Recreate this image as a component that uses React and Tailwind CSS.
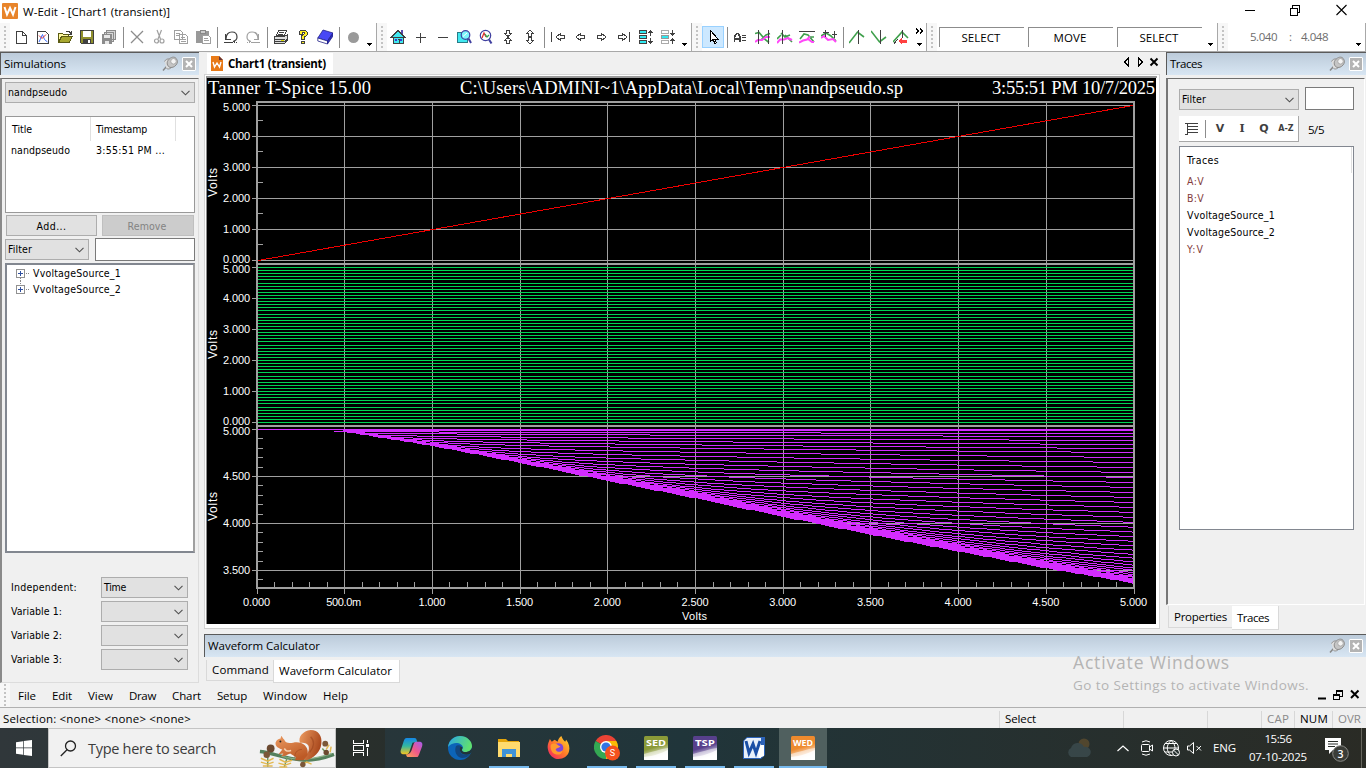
import { useLayoutEffect, useRef } from "react";

/* Text run whose tracking is adjusted so that it takes exactly `w` pixels. */
function T({ w, className = "", children }) {
  const ref = useRef(null);
  useLayoutEffect(() => {
    const el = ref.current;
    el.style.letterSpacing = "0px";
    const natural = el.getBoundingClientRect().width;
    el.style.letterSpacing = (w - natural) / el.textContent.length + "px";
  }, [w]);
  return (
    <span ref={ref} className={"inline-block shrink-0 whitespace-pre " + className}>
      {children}
    </span>
  );
}

const UI = "font-['Open_Sans','Noto_Sans',sans-serif]";
const TAH = "font-['DejaVu_Sans_Condensed','Noto_Sans','DejaVu_Sans',sans-serif] text-[10.5px]";

/* ---------- small building blocks ---------- */

function Pic({ children, className = "h-4 w-4", box = "0 0 16 16" }) {
  return (
    <svg viewBox={box} className={"shrink-0 " + className} fill="none" shapeRendering="crispEdges">
      {children}
    </svg>
  );
}

function Btn({ children }) {
  return <div className="flex h-[22px] w-[22px] shrink-0 items-center justify-center">{children}</div>;
}

function Sep() {
  return (
    <div className="flex w-[6px] shrink-0 justify-center">
      <div className="h-[21px] w-px bg-[#8c8c8c]" />
    </div>
  );
}

function Grip() {
  return (
    <div className="flex w-[10px] shrink-0 flex-col items-center justify-center gap-[2px] bg-[#f7f7f7]">
      {[0, 1, 2, 3, 4, 5].map((i) => (
        <div key={i} className="h-[2px] w-[2px] bg-[#c3c3c3]" />
      ))}
    </div>
  );
}

function Drop() {
  return (
    <div className="flex w-3 shrink-0 items-end justify-center pr-[2px] pb-[5px]">
      <Pic className="h-[3px] w-[5px]" box="0 0 5 3">
        <path d="M0 0h5v1h-1v1h-1v1h-1v-1h-1v-1h-1z" fill="#000" />
      </Pic>
    </div>
  );
}

function Bar({ className, children }) {
  return (
    <div className={"flex h-[29px] shrink-0 items-stretch border-r border-b border-[#a8a8a8] bg-white " + className}>
      {children}
    </div>
  );
}

function Chevron() {
  return (
    <svg viewBox="0 0 9 6" className="h-[6px] w-[9px] shrink-0" fill="none" stroke="#505050" strokeWidth="1.1">
      <path d="M.5 .8 4.5 4.8 8.5 .8" />
    </svg>
  );
}

function Combo({ className, label, w }) {
  return (
    <div className={"flex h-[21px] shrink-0 items-center justify-between border border-[#adadad] bg-[#e1e1e1] pr-[4px] pl-[2px] " + className}>
      {label ? <T w={w} className={TAH}>{label}</T> : <span />}
      <Chevron />
    </div>
  );
}

function PinClose() {
  return (
    <div className="flex items-center gap-[3px]">
      <svg viewBox="0 0 17 16" className="h-4 w-[17px]" fill="none">
        <path d="M1 14.500 5 10" stroke="#888" strokeWidth="1.500" />
        <path d="M2.500 5.500c1-2 3-3 5-2.500l3 7c-2 3-4 3.500-6 2.500" fill="#ddd" stroke="#909090" />
        <path d="M6 4.500c2-3 5-4 7-3s3 4 2 6-3 4-6 4-5-4-3-7z" fill="#c5c5c5" stroke="#8c8c8c" />
        <circle cx="11.500" cy="5.300" r="2.800" fill="#f4f4f4" stroke="#aaa" />
      </svg>
      <div className="flex h-[14px] w-[14px] items-center justify-center rounded-[1px] border border-white bg-[#b4b4b4]">
        <svg viewBox="0 0 8 8" className="h-2 w-2" stroke="#fff" strokeWidth="2">
          <path d="M1 1 7 7M7 1 1 7" />
        </svg>
      </div>
    </div>
  );
}

function PanelHead({ title, w }) {
  return (
    <div className="flex h-[23px] shrink-0 items-center justify-between border-t border-l border-[#5a5a5a] bg-gradient-to-b from-[#bccbda] to-[#d8e6f3] pr-[3px] pb-[1px] pl-[3px]">
      <T w={w} className={UI + " text-[11.5px] text-black"}>{title}</T>
      <PinClose />
    </div>
  );
}

/* ---------- toolbar icons ---------- */

const G = "#404040";
const D = "#a0a0a0";

const Page = () => <path d="M3.500 2.500h6l4 4v8h-10zM9.500 2.500v4h4" stroke={G} fill="#fff" />;
const NewChart = () => (
  <>
    <path d="M2.500 2.500h8l3 3v9h-11z" stroke={G} fill="#fff" />
    <g shapeRendering="auto">
      <path d="M4 13 7.500 5.500l2 5 3 2.500" stroke="#3a6cff" />
      <path d="M4 6.500l3 3 4-4" stroke="#e03030" />
    </g>
  </>
);
const OpenI = () => (
  <>
    <path d="M1.500 13.500v-9h4l1 1h5v2" stroke="#5b5b14" fill="#fff9a0" />
    <path d="M1.500 13.500 4.500 7.500h11l-3.500 6z" stroke="#5b5b14" fill="#a8a830" />
    <path d="M9 2.500h3l2 2M14.500 2v3h-3" stroke={G} />
  </>
);
const SaveI = () => (
  <>
    <path d="M1.500 1.500h13v13h-12l-1-1z" stroke={G} fill="#8f8f2c" />
    <path d="M4 2h8v6h-8z" fill="#fff" />
    <path d="M4 10h8v4h-8z" fill={G} />
    <path d="M9 11h2v3h-2z" fill="#fff" />
  </>
);
const SaveAll = () => (
  <>
    <path d="M5.500 1.500h9v9h-9zM3.500 3.500h9v9h-9z" stroke="#8c8c8c" fill="#d8d8d8" />
    <path d="M1 5h10v10H1z" fill="#8c8c8c" />
    <path d="M3 6h6v3H3zM4 12h4v3H4z" fill="#e8e8e8" />
  </>
);
const CutX = () => <path d="M2 2 14 14M14 2 2 14" stroke="#8c8c8c" strokeWidth="1.300" shapeRendering="auto" />;
const Scissors = () => (
  <g stroke={D} shapeRendering="auto" strokeWidth="1.200">
    <path d="M6 1 9.500 10M10.500 1 7 10" />
    <circle cx="5.500" cy="12" r="2" />
    <circle cx="11" cy="12" r="2" />
  </g>
);
const CopyI = () => (
  <>
    <path d="M1.500 1.500h6l2 2v7h-8zM6.500 5.500h6l2 2v7h-8z" stroke={D} fill="#fff" />
    <path d="M3 4.500h4M3 6.500h3M8 8.500h4M8 10.500h5M8 12.500h5" stroke={D} />
  </>
);
const PasteI = () => (
  <>
    <path d="M1 2h13v12H1z" fill="#999" />
    <path d="M5 1h5v3H5z" fill="#ccc" stroke="#888" />
    <path d="M7.500 6.500h6l2 2v6h-8z" fill="#fff" stroke={D} />
    <path d="M9 9.500h4M9 11.500h5" stroke={D} />
  </>
);
const UndoI = ({ c }) => (
  <g stroke={c}>
    <path d="M2.500 5v5.500h5" />
    <path d="M3 10C3 5 6 3 9 3s5 2 5 5-2 4-4 4.500" strokeWidth="1.200" shapeRendering="auto" />
    <path d="M1 13.500h9M11 13.500h1M13 13.500h1M10 12.500h2" />
  </g>
);
const PrintI = () => (
  <>
    <path d="M5.500 1.500h8l-2 5h-8z" fill="#fff" stroke={G} />
    <path d="M6 3.500h5M5 5.500h5" stroke={G} />
    <path d="M1.500 7.500h10l3-2v6l-3 3h-10z" fill="#ddd" stroke={G} />
    <path d="M2 10.500h10M2 12.500h10l2-2" stroke={G} />
    <path d="M8 11.500h3" stroke="#d8d800" />
  </>
);
const HelpI = () => (
  <>
    <path d="M4 5V3l2-2h4l2 2v3l-2.500 2v2.500h-3V7L9 5V3.500H7V5z" fill="#ffee20" stroke={G} />
    <path d="M6.500 12.500h3v2h-3z" fill="#ffee20" stroke={G} />
  </>
);
const BookI = () => (
  <g shapeRendering="auto">
    <path d="M6 1 16 4 10.500 12 .8 9z" fill="#4747f5" stroke="#222288" strokeWidth=".8" />
    <path d="M.8 9v3l9.700 3V12z" fill="#fff" stroke="#222288" strokeWidth=".8" />
    <path d="M10.500 12v3L16 7V4z" fill="#2c2cc0" stroke="#222288" strokeWidth=".8" />
  </g>
);
const HomeI = () => (
  <>
    <path d="M11 1h2v5h-2z" fill="#5a4ab0" />
    <path d="M1 8.500 8 1.500l7 7zM3 8.500h10v5.500H3z" fill="#40e8f0" stroke={G} />
    <path d="M5 10h2v2H5zM10 10h2v2h-2z" fill="#3838d0" />
    <path d="M7.500 10.500h2v3" stroke={G} />
  </>
);
const PlusI = () => <path d="M3.500 8.500h10M8.500 3.500v10" stroke={G} />;
const MinusI = () => <path d="M3.500 8.500h10" stroke={G} />;
const ZoomBox = () => (
  <>
    <path d="M1.500 3.500h10v10h-10z" fill="#40e8f0" stroke="#287c88" />
    <g shapeRendering="auto">
      <circle cx="9.500" cy="6" r="4.300" fill="#7cf4fa" stroke="#4040a0" strokeWidth="1.200" />
      <path d="M7 7.500 11 4" stroke="#fff" />
      <path d="M12.500 9.500 15 14" stroke="#4040a0" strokeWidth="2" />
    </g>
  </>
);
const ZoomWave = () => (
  <g shapeRendering="auto">
    <circle cx="7.500" cy="6.500" r="5.200" fill="#fff" stroke="#4040a0" strokeWidth="1.200" />
    <path d="M4 9 6 4l2 4" stroke="#e03030" strokeWidth="1.300" />
    <path d="M7 5l2 3 2-2" stroke="#30a050" strokeWidth="1.300" />
    <path d="M11 10.500 13.500 14.500" stroke="#4040a0" strokeWidth="2" />
  </g>
);
const VertIn = () => <path d="M6.500 1.500h3v3h2L8 7.500 4.500 4.500h2zM6.500 14.500h3v-3h2L8 8.500 4.500 11.500h2z" stroke={G} />;
const VertOut = () => <path d="M6.500 7.500h3v-3h2L8 1 4.500 4.500h2zM6.500 8.500h3v3h2L8 15 4.500 11.500h2z" stroke={G} />;
const ArrowL = ({ x = 0 }) => <path transform={`translate(${x} 0)`} d="M12.500 6.500v3h-4v2L4 8l4.500-3.500v2z" stroke={G} />;
const ArrowR = ({ x = 0 }) => <path transform={`translate(${x} 0)`} d="M3.500 6.500v3h4v2L12 8 7.500 4.500v2z" stroke={G} />;
const Stack = ({ inward }) => (
  <>
    <path d="M1.500 1.500h7v3h-7zM1.500 11.500h7v3h-7z" fill={inward ? "#fff" : "#30e8f0"} stroke={inward ? "#aaa" : G} />
    <path d="M1.500 6.500h7v3h-7z" fill="#30e8f0" stroke={inward ? "#999" : G} />
    <path d={inward ? "M12.500 1v6M10 4.500h5M11 5.500h3M12.500 15V9M10 11.500h5M11 10.500h3" : "M12.500 1v6M10 3.500h5M11 2.500h3M12.500 15V9M10 12.500h5M11 13.500h3"} stroke={G} />
  </>
);
const CursorI = () => <path d="M5.500 1.500v11l2.500-2 2 4 1.500-1-2-3.500h3.500z" fill="#fff" stroke="#000" />;

const Green = ({ d }) => <path d={d} stroke="#3fa04c" strokeWidth="1.600" shapeRendering="auto" />;
const Pink = ({ d }) => <path d={d} stroke="#ff48f8" strokeWidth="2" shapeRendering="auto" />;
const Wave1 = () => (<><Green d="M0 4.500 4 3.500l6 7 4 3M6 11l5-5 4-1.500" /><Pink d="M0 13l3-2h4l4-3h4" /><path d="M3.500 1v14M13.500 1v14" stroke={G} /></>);
const Wave2 = () => (<><Green d="M0 10 4 6M4 4l4 4 5-2M8 6l7 7" /><Pink d="M0 14 3 10.500h4l4-1.500 4 2" /><path d="M5.500 1v14" stroke={G} /></>);
const Wave3 = () => (<><path d="M0 2.500h16" stroke={G} /><Green d="M1 10 5 5l4 1 6 7M10 8l5 0" /><Pink d="M0 13.500l4-2 4-1 3-3" /><Pink d="M9 10l4 3h2" /></>);
const Wave4 = () => (<><Green d="M0 7 5 4l5 3 5 5" /><Pink d="M0 9l3-2 4 4 5-1 3 3" /><path d="M4.500 1v7M1.500 3.500h6M13.500 2v7M10.500 5.500h5" stroke={G} /></>);
const Peak = () => (<><Green d="M0 14 8.500 3 15 8" /><path d="M9.500 1v14" stroke={G} /></>);
const Valley = () => (<><Green d="M0 2 8.500 13 15 8" /><path d="M9.500 1v14" stroke={G} /></>);
const PeakBack = () => (<><Green d="M0 13 9 3l6 6" /><path d="M9.500 1v8M1 14.500 5 10" stroke={G} /><path d="M5 12l4-4v3h5v3H9v2z" fill="#ff4040" /></>);
const MarkA = () => (
  <>
    <path d="M1.500 13V7.500L4 4.500h1l2 3V13M2 10h5" stroke={G} strokeWidth="1.800" />
    <path d="M9 6.500h4M9 8.500h4M9 11.500h4" stroke={G} />
  </>
);

function Toolbars() {
  return (
    <div className="flex h-[29px] shrink-0 bg-white">
      <Bar className="w-[377px]">
        <Grip />
        <div className="flex items-center">
          {[Page, NewChart, OpenI, SaveI, SaveAll].map((I, i) => <Btn key={i}><Pic><I /></Pic></Btn>)}
          <Sep />
          {[CutX, Scissors, CopyI, PasteI].map((I, i) => <Btn key={i}><Pic><I /></Pic></Btn>)}
          <Sep />
          <Btn><Pic><UndoI c={G} /></Pic></Btn>
          <Btn><Pic className="h-4 w-4 -scale-x-100"><UndoI c={D} /></Pic></Btn>
          <Sep />
          {[PrintI, HelpI, BookI].map((I, i) => <Btn key={i}><Pic><I /></Pic></Btn>)}
          <Sep />
          <Btn><div className="h-[11px] w-[11px] rounded-full bg-[#9a9a9a]" /></Btn>
        </div>
        <Drop />
      </Bar>
      <Bar className="w-[315px]">
        <Grip />
        <div className="flex items-center">
          {[HomeI, PlusI, MinusI, ZoomBox, ZoomWave, VertIn, VertOut].map((I, i) => <Btn key={i}><Pic><I /></Pic></Btn>)}
          <Sep />
          <Btn><Pic><path d="M1.500 3v10" stroke={G} /><ArrowL x={2} /></Pic></Btn>
          <Btn><Pic><ArrowL /></Pic></Btn>
          <Btn><Pic><ArrowR /></Pic></Btn>
          <Btn><Pic><ArrowR x={-1} /><path d="M13.500 3v10" stroke={G} /></Pic></Btn>
          <Btn><Pic><Stack /></Pic></Btn>
          <Btn><Pic><Stack inward /></Pic></Btn>
        </div>
        <Drop />
      </Bar>
      <Bar className="w-[235px]">
        <Grip />
        <div className="flex items-center">
          <div className="flex h-[22px] w-[22px] items-center justify-center border border-[#99d1ff] bg-[#cce8ff]"><Pic><CursorI /></Pic></div>
          <Sep />
          {[MarkA, Wave1, Wave2, Wave3, Wave4].map((I, i) => <Btn key={i}><Pic><I /></Pic></Btn>)}
          <Sep />
          {[Peak, Valley, PeakBack].map((I, i) => <Btn key={i}><Pic><I /></Pic></Btn>)}
        </div>
        <div className="flex w-3 flex-col items-center justify-between pt-[5px] pb-[5px] pl-[2px]">
          <Pic className="h-[6px] w-[9px]" box="0 0 9 6"><path d="M1 .5l2.500 2.500L1 5.500M5 .5l2.500 2.500L5 5.500" stroke="#000" strokeWidth="1.700" /></Pic>
          <Pic className="h-[3px] w-[5px]" box="0 0 5 3"><path d="M0 0h5v1h-1v1h-1v1h-1v-1h-1v-1h-1z" fill="#000" /></Pic>
        </div>
      </Bar>
      <Bar className="w-[291px]">
        <Grip />
        <div className="flex flex-1 items-center gap-[4px] pl-[2px]">
          {[["SELECT", 39], ["MOVE", 33], ["SELECT", 39]].map(([s, w], i) => (
            <div key={i} className="flex h-5 w-[85px] items-center justify-center border-t border-l border-[#8c8c8c] pr-[2px]">
              <T w={w} className={UI + " text-[11.5px]"}>{s}</T>
            </div>
          ))}
        </div>
        <Drop />
      </Bar>
      <Bar className="flex-1">
        <Grip />
        <div className={UI + " flex flex-1 items-center pl-[22px] text-[11.5px] text-[#6d6d6d]"}>
          <T w={27}>5.040</T>
          <T w={3} className="ml-[12px]">:</T>
          <T w={27} className="ml-[9px]">4.048</T>
        </div>
        <Drop />
      </Bar>
    </div>
  );
}

/* ---------- chart ---------- */

const GRID = "#a0a0a0";
const X0 = 257;
const DX = 87.7;
const LOWER = [0, 2, 16, 33, 51, 68.500, 87, 105, 122, 139, 154.500];

function lowerEdge(v) {
  if (v < 0.430) return 0;
  const k = Math.min(Math.floor(v * 2), 9);
  return LOWER[k] + (LOWER[k + 1] - LOWER[k]) * (v * 2 - k);
}

/* Drop in pixels that each swept curve settles to at the right edge. */
const SETTLED = [0.300, 1, 4, 7, 11, 15, 19, 23];
while (SETTLED.length < 48) SETTLED.push(SETTLED[SETTLED.length - 1] + 5);

function transferCurves() {
  return SETTLED.map((asym) => {
    let d = "";
    let last = null;
    for (let s = 0; s <= 200; s++) {
      const v = s / 40;
      const e = lowerEdge(v);
      const p = 3 + v;
      const a = asym * Math.pow(v / 5, 0.300);
      const drop = e <= 0 ? 0 : Math.pow(Math.pow(a, -p) + Math.pow(e, -p), -1 / p);
      const y = 429.5 + Math.round(drop);
      const x = Math.round(X0 + v * 175.4) - 2;
      if (last === null) d += `M257 ${y}`;
      else if (y !== last) d += `H${x}M${x} ${y}`;
      last = y;
    }
    return d + "H1133";
  });
}

const CURVES = transferCurves();
const range = (n) => Array.from({ length: n }, (_, i) => i);

function ChartView() {
  const rows = [
    ...range(6).map((i) => [260 - 31 * i, `${i}.000`, i === 0 ? 263 : i === 5 ? 111 : 264 - 31 * i]),
    ...range(6).map((i) => [422 - 31 * i, `${i}.000`, i === 0 ? 425 : i === 5 ? 273 : 426 - 31 * i]),
    [429, "5.000", 435],
    [476, "4.500", 480],
    [523, "4.000", 527],
    [570, "3.500", 574],
  ];
  const xl = ["0.000", "500.0m", "1.000", "1.500", "2.000", "2.500", "3.000", "3.500", "4.000", "4.500", "5.000"];
  return (
    <svg viewBox="207 78 949 546" className="block h-[546px] w-[949px] bg-black">
      <g stroke={GRID} shapeRendering="crispEdges" fill="none">
        {range(11).map((i) => {
          const x = Math.floor(X0 + DX * i) + 0.5;
          return <path key={i} d={`M${x} 102V594`} />;
        })}
        {rows.map(([y], i) => <path key={i} d={`M252 ${y + 0.5}H1134`} />)}
        {range(5).map((i) => <path key={i} d={`M257 ${244.500 - 31 * i}h6`} />)}
        {range(16).map((i) => <path key={i} d={`M257 ${Math.floor(438.900 + 9.400 * i) + 0.5}h6`} />)}
        {range(50).map((i) => <path key={i} d={`M${Math.floor(X0 + 17.540 * i) + 0.5} 582v6`} />)}
      </g>
      <g shapeRendering="crispEdges" fill="none">
        {range(51).map((i) => (
          <path key={i} d={`M258 ${Math.round(422 - 3.100 * i) + 0.5}H1133`} stroke="#00d453" />
        ))}
        {CURVES.map((d, i) => <path key={i} d={d} stroke="#d42cff" />)}
        <path d="M258 260.500 1133 105.500" stroke="#f00000" />
      </g>
      <g fill={GRID} shapeRendering="crispEdges">
        <path d="M256 101h879v2H256zM256 263h879v2H256zM256 425h879v2H256zM256 587h879v2H256zM256 101h2v488h-2zM1133 101h2v488h-2z" />
      </g>
      <g fill="#fff" className="font-['Liberation_Sans',sans-serif] text-[11px]">
        {rows.map(([, t, y], i) => <text key={i} x="223" y={y} textLength="27">{t}</text>)}
        {xl.map((t, i) => (
          <text key={t} x={X0 + DX * i - (i === 1 ? 18.500 : 14)} y="606" textLength={i === 1 ? 35 : 27}>{t}</text>
        ))}
        <text x="682" y="620" textLength="25">Volts</text>
      </g>
      <g fill="#fff" className="font-['Liberation_Sans',sans-serif] text-[12px]">
        {[197, 359, 521].map((y) => (
          <text key={y} transform={`translate(217 ${y}) rotate(-90)`} textLength="29">Volts</text>
        ))}
      </g>
      <g fill="#fff" className="font-['Liberation_Serif',serif] text-[18.5px]">
        <text x="208" y="94" textLength="163">Tanner T-Spice 15.00</text>
        <text x="460" y="94" textLength="443">C:\Users\ADMINI~1\AppData\Local\Temp\nandpseudo.sp</text>
        <text x="992" y="94" textLength="163">3:55:51 PM 10/7/2025</text>
      </g>
    </svg>
  );
}

/* ---------- panels ---------- */

function Simulations() {
  return (
    <div className="flex h-[631px] w-[199px] shrink-0 flex-col">
      <PanelHead title="Simulations" w={62} />
      <div className="mt-[3px] flex flex-1 flex-col border-t border-r border-b border-l-2 border-t-[#6e6e6e] border-r-[#dcdcdc] border-b-[#dcdcdc] border-l-[#8a8a8a] pl-[3px]">
        <Combo className="mt-[3px] w-[190px]" label="nandpseudo" w={59} />
        <div className={TAH + " mt-[13px] h-[97px] w-[190px] shrink-0 border border-[#999] bg-white"}>
          <div className="flex h-[24px]">
            <div className="flex w-[85px] items-center border-r border-[#e0e0e0] pl-[6px]"><T w={20}>Title</T></div>
            <div className="flex w-[85px] items-center border-r border-[#e0e0e0] pl-[5px]"><T w={51}>Timestamp</T></div>
          </div>
          <div className="flex h-[18px] items-center pl-[5px]">
            <T w={59}>nandpseudo</T>
            <T w={69} className="ml-[26px]">3:55:51 PM ...</T>
          </div>
        </div>
        <div className={TAH + " mt-[2px] flex h-[21px] shrink-0 gap-[5px] pl-[1px]"}>
          <div className="flex w-[91px] items-center justify-center border border-[#adadad] bg-[#e1e1e1] pt-[1px]"><T w={30}>Add...</T></div>
          <div className="flex w-[92px] items-center justify-center border border-[#bfbfbf] bg-[#ccc] pt-[1px] pr-[2px] text-[#838383]"><T w={39}>Remove</T></div>
        </div>
        <div className="mt-[2px] flex h-[23px] shrink-0 items-center">
          <Combo className="w-[84px]" label="Filter" w={24} />
          <div className="ml-[6px] h-[23px] w-[100px] border border-[#7a7a7a] bg-white" />
        </div>
        <div className={TAH + " mt-[2px] h-[290px] w-[190px] shrink-0 border-2 border-[#828790] border-r-[#a0a0a0] bg-white pl-[9px]"}>
          {["VvoltageSource_1", "VvoltageSource_2"].map((s, i) => (
            <div key={s} className="flex h-4 items-center">
              <svg viewBox="0 0 16 16" className="h-4 w-4 shrink-0" shapeRendering="crispEdges" fill="none">
                <path d={i ? "M4.500 0v4M10 8.500h4" : "M4.500 13v3M10 8.500h4"} stroke="#888" strokeDasharray="1 1" />
                <path d="M.5 4.500h8v8h-8z" fill="#fff" stroke="#919191" />
                <path d="M2 8.500h5M4.500 6v5" stroke="#3050a0" />
              </svg>
              <T w={88} className="ml-[1px]">{s}</T>
            </div>
          ))}
        </div>
        <div className={TAH + " mt-[24px] flex flex-col gap-[3px] pl-[6px]"}>
          {[["Independent:", 66, "Time"], ["Variable 1:", 51], ["Variable 2:", 51], ["Variable 3:", 51]].map(([t, w, v]) => (
            <div key={t} className="flex h-[21px] items-center">
              <div className="w-[90px]"><T w={w}>{t}</T></div>
              <Combo className="w-[87px]" label={v} w={22} />
            </div>
          ))}
        </div>
      </div>
    </div>
  );
}

function ChartPane() {
  return (
    <div className="ml-[5px] flex w-[956px] shrink-0 flex-col">
      <div className="flex h-[22px] items-end justify-between pl-[3px]">
        <div className="flex h-[21px] w-[126px] items-center bg-white pl-[4px]">
          <svg viewBox="0 0 12 15" className="h-[15px] w-3">
            <path d="M0 0h8l4 4v11H0z" fill="#e87a17" />
            <path d="M8 0v4h4z" fill="#633" />
            <path d="M2 6l1.500 5L6 7l2.500 4L10 6" fill="none" stroke="#fff" strokeWidth="1.400" />
          </svg>
          <T w={98} className={UI + " ml-[5px] text-[11.5px] font-bold"}>Chart1 (transient)</T>
        </div>
        <svg viewBox="0 0 36 10" className="mr-[1px] mb-[7px] h-[10px] w-9" fill="none" stroke="#000">
          <path d="M5.500 1v8L1.500 5zM15.500 1v8L19.500 5z" shapeRendering="crispEdges" />
          <path d="M27.500 1.500 34.500 8.500M34.500 1.500 27.500 8.500" strokeWidth="1.900" />
        </svg>
      </div>
      <div className="border border-[#d4d4d4] border-b-[#cfcfcf] bg-white pt-[1px] pr-[2px] pb-[4px] pl-[1px]">
        <div className="border-t-2 border-l border-[#8a8a8a] border-t-[#9a9a9a]">
          <ChartView />
        </div>
      </div>
    </div>
  );
}

function Traces() {
  return (
    <div className="ml-[6px] flex w-[200px] flex-col">
      <PanelHead title="Traces" w={32} />
      <div className="mt-[3px] flex h-[527px] w-[199px] shrink-0 flex-col border-t border-r border-b border-l-2 border-t-[#6e6e6e] border-r-white border-b-white border-l-[#777] pl-[11px]">
        <div className="mt-[8px] flex h-[23px] shrink-0 items-center gap-[6px]">
          <Combo className="w-[120px] self-end" label="Filter" w={24} />
          <div className="h-[23px] w-[49px] border border-[#7a7a7a] bg-white" />
        </div>
        <div className="mt-[6px] flex h-[26px] shrink-0 items-center">
          <div className="flex h-[26px] w-[120px] items-center border-r border-b border-[#a8a8a8] bg-white pl-[5px]">
            <Pic><path d="M1 2.500h13M3.500 3v10M4 5.500h10M4 8.500h10M4 11.500h10M1 13.500h3" stroke={G} /></Pic>
            <div className="mr-[3px] ml-[5px] h-[18px] w-px shrink-0 bg-[#8c8c8c]" />
            <div className="flex shrink-0 items-center font-['DejaVu_Sans','Liberation_Sans',sans-serif] text-[11px] font-bold text-[#404040]">
              <span className="w-[22px] text-center">V</span>
              <span className="w-[22px] text-center font-['DejaVu_Serif',serif]">I</span>
              <span className="w-[22px] text-center">Q</span>
              <span className="w-[22px] text-center text-[8px] leading-none">A-Z</span>
            </div>
          </div>
          <T w={16} className={UI + " mt-[2px] ml-[9px] text-[11.5px]"}>5/5</T>
        </div>
        <div className={TAH + " mt-[4px] h-[384px] w-[175px] shrink-0 border border-[#828790] bg-white pl-[7px]"}>
          <div className="mr-[1px] flex h-[26px] items-center border-r border-[#e0e0e0]"><T w={32}>Traces</T></div>
          {[["A:V", 17, 1], ["B:V", 17, 1], ["VvoltageSource_1", 88], ["VvoltageSource_2", 88], ["Y:V", 17, 1]].map(([t, w, r]) => (
            <div key={t} className={"flex h-[17px] items-center " + (r ? "text-[#843c3c]" : "text-black")}>
              <T w={w}>{t}</T>
            </div>
          ))}
        </div>
      </div>
      <div className={UI + " flex h-[25px] shrink-0 pt-[1px] pl-[2px] text-[11.5px]"}>
        <div className="flex h-[22px] w-[64px] items-center border-b border-l border-[#d9d9d9] pl-[5px]"><T w={53}>Properties</T></div>
        <div className="flex h-[24px] w-[47px] items-center border-r border-b border-[#d9d9d9] bg-white pl-[5px]"><T w={32}>Traces</T></div>
      </div>
    </div>
  );
}

/* ---------- taskbar ---------- */

function Squirrel() {
  return (
    <svg viewBox="0 0 78 40" className="h-[39px] w-[78px]" fill="none">
      <defs>
        <linearGradient id="fur" x1="0" y1="0" x2=".6" y2="1">
          <stop offset="0" stopColor="#eb9a60" />
          <stop offset="1" stopColor="#bd5a26" />
        </linearGradient>
        <linearGradient id="tail" x1="0" y1="0" x2="1" y2=".4">
          <stop offset="0" stopColor="#ee9d62" />
          <stop offset="1" stopColor="#a9481d" />
        </linearGradient>
      </defs>
      <path d="M2 23c12 1 26 8 46 9 12 0 22-3 30-6" stroke="#54805c" strokeWidth="3.500" />
      <path d="M24 28c12 3 22 4 32 2s14-3 20-5" stroke="#8db38c" strokeWidth="1.200" />
      <path d="M10 26v13M30 29l-3 10M48 33l-2 6M66 20l6 7" stroke="#6f9a62" strokeWidth="1.500" />
      <path d="M3 30l7 3 6-3M3 34l7 2 6-2M5 38h10M22 31l6 3 7-2M21 35l7 2 6-2M22 39h8M44 37l6-3 5 2M70 21l3-5M74 24l1-6" stroke="#e3b850" strokeWidth="1.500" />
      <circle cx="13" cy="20" r="4" fill="#6b4930" /><circle cx="9" cy="26.500" r="3.300" fill="#7b5738" />
      <circle cx="46" cy="36.500" r="2.800" fill="#7b5738" /><circle cx="69" cy="15" r="3" fill="#7b5738" /><circle cx="70" cy="24" r="2.800" fill="#6b4930" />
      <path d="M46 30c4-3 7-7 6-12-1-4-5-4-9-4-2-6 3-12 11-13 8 0 12 6 11 14-1 9-8 15-16 17z" fill="url(#tail)" />
      <path d="M54 8c4 4 4 10-1 16" stroke="#8f3a16" strokeWidth="1.500" opacity=".45" />
      <path d="M18 15c0-3 3-5 5-5l1-3 2 3 1 1c1 3 4 4 9 3 8-2 16 3 15 11 0 3-3 4-4 7h-9l1-3-6-4c-3 1-4 3-9 3l2-3-5 1 4-5c-3-1-7-3-7-6z" fill="url(#fur)" />
      <circle cx="23" cy="12.800" r="1" fill="#222" />
      <path d="M27 20c2 3 3 3 7 2" stroke="#f6cfae" strokeWidth="1.600" />
      <path d="M38 30c-1-5 2-9 7-9" stroke="#9a431b" strokeWidth="1" opacity=".6" />
    </svg>
  );
}

function AppTile({ children, open, active }) {
  return (
    <div className={"flex h-10 w-12 shrink-0 flex-col items-center " + (active ? "bg-[#50605f]" : "")}>
      <div className="flex h-[38px] items-center pt-[1px]">{children}</div>
      <div className={"h-[2px] " + (active ? "w-12 " : "w-10 ") + (open ? "bg-[#76b9ed]" : "")} />
    </div>
  );
}

function Suite({ id, name, c }) {
  return (
    <svg viewBox="0 0 24 24" className="h-6 w-6">
      <defs>
        <linearGradient id={id} x1="0" y1="0" x2=".3" y2="1">
          <stop offset="0" stopColor={c} />
          <stop offset=".55" stopColor={c} />
          <stop offset="1" stopColor="#fff" />
        </linearGradient>
      </defs>
      <rect width="24" height="24" rx="1.500" fill={`url(#${id})`} />
      <path d="M0 18C8 16 16 13 24 12V24H0z" fill="#fff" opacity=".5" />
      <path d="M0 21c10-1 18-4 24-7v10H0z" fill="#fff" opacity=".8" />
      <text x="2" y="9.500" fill="#fff" textLength="20" lengthAdjust="spacingAndGlyphs" className="font-['Open_Sans',sans-serif] text-[9.5px] font-bold">{name}</text>
    </svg>
  );
}

function Taskbar() {
  return (
    <div className="flex h-10 shrink-0 bg-gradient-to-r from-[#30373a] via-[#20353a] to-[#2a2b25]">
      <div className="flex w-12 items-center justify-center">
        <svg viewBox="0 0 16 16" className="h-4 w-4" fill="#fff"><path d="M0 2.200 7 1.200V7.600H0zM7.700 1.100 16 0V7.600H7.700zM0 8.300H7V14.800L0 13.800zM7.700 8.300H16V16L7.700 14.900z" /></svg>
      </div>
      <div className="flex w-72 items-center border border-[#c4c4c4] bg-[#f1f1f1] pl-[11px]">
        <svg viewBox="0 0 17 17" className="h-[17px] w-[17px]" fill="none" stroke="#222" strokeWidth="1.300"><circle cx="10.500" cy="6" r="5" /><path d="M7 9.700.8 16" /></svg>
        <T w={128} className={UI + " mt-[2px] ml-[11px] text-[14.5px] text-[#3c3c3c]"}>Type here to search</T>
        <div className="ml-auto"><Squirrel /></div>
      </div>
      <div className="mr-[2px] flex w-[49px] items-center justify-center bg-[#2a2c26]/70">
        <svg viewBox="0 0 16 16" className="h-4 w-4" fill="none" stroke="#fff" shapeRendering="crispEdges"><path d="M.5 0v3.500h10V0M.5 16v-3.500h10V16M.5 5.500h10v5H.5zM14.500 0v3M14.500 8v8" /><path d="M13 4h3v3h-3z" fill="#fff" stroke="none" /></svg>
      </div>
      <div className="flex gap-px">
        <AppTile>
          <svg viewBox="0 0 24 24" className="h-[23px] w-[23px]">
            <defs>
              <linearGradient id="cpa" x1="0" y1="0" x2="0" y2="1"><stop stopColor="#1487e8" /><stop offset=".5" stopColor="#33b8a0" /><stop offset="1" stopColor="#f5c320" /></linearGradient>
              <linearGradient id="cpb" x1="1" y1="0" x2="0" y2="1"><stop stopColor="#a45cf0" /><stop offset=".5" stopColor="#f0588a" /><stop offset="1" stopColor="#ffa850" /></linearGradient>
            </defs>
            <path d="M7 2h8c2 0 2 1 3 4l-5 1-3 9c-1 3-2 3-4 3H4c-3 0-4-2-3-5L4 5c1-2 1-3 3-3z" fill="url(#cpa)" />
            <path d="M17 22H9c-2 0-2-1-3-3 3 0 5-1 6-4l2-6c1-3 2-3 4-3h2c3 0 4 2 3 5l-3 8c-1 2-1 3-3 3z" fill="url(#cpb)" />
          </svg>
        </AppTile>
        <AppTile>
          <svg viewBox="0 0 24 24" className="h-6 w-6">
            <defs><linearGradient id="edg" x1="0" y1="0" x2="1" y2=".3"><stop stopColor="#2aa5e8" /><stop offset="1" stopColor="#5fe070" /></linearGradient></defs>
            <circle cx="12" cy="12" r="12" fill="#0c64b8" />
            <path d="M0 11C1 4 6 0 12 0c7 0 12 5 12 10 0 4-3 6-6 6-4 0-5-2-3-4 0-3-3-5-7-5-5 0-8 4-8 4z" fill="url(#edg)" />
            <path d="M8 10c-2 5 0 11 6 12 3 0 6-1 8-4-4 2-9 1-10-3-.5-2 .5-4 1-5-1-1-4-1-5 0z" fill="#12467f" />
            <path d="M12.500 10.500c1.500 0 2.500 1 1.800 2-1.500 3 2 4 4 3.500 2-.4 4.500-1 5.500-4.500l.2 4-2 2.500c-4 1.500-9 .5-10-3-.4-1.500 0-3.500.5-4.500z" fill="#20353a" />
          </svg>
        </AppTile>
        <AppTile open>
          <svg viewBox="0 0 22 20" className="h-5 w-[22px]"><path d="M0 1h8l2 2h11v16H0z" fill="#e5a50a" /><path d="M0 4h22v15H0z" fill="#ffdb6e" /><path d="M4 19v-8h14v8h-4v-3H8v3z" fill="#3f93d8" /></svg>
        </AppTile>
        <AppTile>
          <svg viewBox="0 0 24 24" className="h-[23px] w-[23px]">
            <defs><linearGradient id="ffx" x1="1" y1="0" x2="0" y2="1"><stop stopColor="#ffe02c" /><stop offset=".5" stopColor="#ff7a28" /><stop offset="1" stopColor="#f0186c" /></linearGradient></defs>
            <path d="M1 14C0 9 2 6 3 3l2 3 3-2 3 2c1-3 2-5 4-6 1 3 2 4 4 6l1-2c3 4 4 8 3 12-1 5-6 8-11 8S2 20 1 14z" fill="url(#ffx)" />
            <circle cx="12" cy="12.500" r="5" fill="#8045d8" />
            <path d="M4 9c3-2 6-1 8 1l2 1c-2 2-4 1-5 3 1 3 5 3 7 1 0 4-4 5-7 4-4-1-6-6-5-10z" fill="#ff9a2c" />
          </svg>
        </AppTile>
        <AppTile open>
          <svg viewBox="0 0 26 26" className="h-[26px] w-[26px]">
            <path d="M12 12 1.600 6A12 12 0 0 1 22.400 6z" fill="#ea4335" />
            <path d="M12 12 1.600 6A12 12 0 0 0 12 24z" fill="#34a853" />
            <path d="M12 12V24A12 12 0 0 0 22.400 6H12z" fill="#fbbc05" />
            <circle cx="12" cy="12" r="6" fill="#fff" /><circle cx="12" cy="12" r="4.600" fill="#3275e4" />
            <circle cx="18.500" cy="18" r="7.500" fill="#f4511e" />
            <text x="18.500" y="21.200" fill="#fff" textAnchor="middle" className="font-['Roboto',sans-serif] text-[9px]">S</text>
          </svg>
        </AppTile>
        <AppTile open><Suite id="sed" name="SED" c="#8a9a38" /></AppTile>
        <AppTile open><Suite id="tsp" name="TSP" c="#57408c" /></AppTile>
        <AppTile open>
          <svg viewBox="0 0 22 22" className="h-[22px] w-[22px]">
            <path d="M4 0h18v18l-4 4H0V4z" fill="#2d63b8" /><path d="M4 1h14v20H1V4z" fill="#e8f0fa" /><path d="M14 8h7v11l-5 2z" fill="#fff" />
            <path d="M3 4l3 12 4-9 3 9 4-12" fill="none" stroke="#1b4fa5" strokeWidth="3" />
          </svg>
        </AppTile>
        <AppTile open active><Suite id="wed" name="WED" c="#ee8a2e" /></AppTile>
      </div>
      <div className="ml-auto flex items-center text-white">
        <svg viewBox="0 0 26 20" className="mr-[25px] h-5 w-[26px] opacity-25"><circle cx="18" cy="6" r="5.500" fill="#d08a30" /><path d="M5 19a5 5 0 0 1 0-9 7 7 0 0 1 13-1 5 5 0 0 1 3 10z" fill="#6a8a98" /></svg>
        <svg viewBox="0 0 12 7" className="mr-[12px] h-[7px] w-3" fill="none" stroke="#fff" strokeWidth="1.200"><path d="M.5 6 6 1l5.500 5" /></svg>
        <svg viewBox="0 0 12 16" className="mr-[10px] h-4 w-3" fill="none" stroke="#fff"><rect x=".5" y="4.500" width="8" height="7" rx="1" /><path d="M8.500 7 11.500 5v6L8.500 9M1 2q4-2.500 8 0M1 14q4 2.500 8 0" /></svg>
        <svg viewBox="0 0 18 17" className="mr-[6px] h-[17px] w-[18px]" fill="none" stroke="#fff"><circle cx="8" cy="8" r="7.500" /><path d="M.5 8h15M2 3.500h12M2 12h8M8 .5c-5 5-5 10 0 15M8 .5c3 2 4 5 4 8" /><circle cx="13" cy="12.500" r="3.500" fill="#2a3432" /><path d="M10.500 10 15.500 15" /></svg>
        <svg viewBox="0 0 16 14" className="mr-[10px] h-[14px] w-4" fill="none" stroke="#fff"><path d="M.5 5v4h2l4 3.500v-11L2.500 5zM9.500 5l4.500 4.500M14 5 9.500 9.500" /></svg>
        <T w={23} className={UI + " text-[11.5px]"}>ENG</T>
        <div className={UI + " ml-[12px] flex w-[60px] flex-col items-center text-[11.5px] leading-[18px]"}>
          <T w={27}>15:56</T>
          <T w={58}>07-10-2025</T>
        </div>
        <svg viewBox="0 0 24 26" className="mt-[2px] mr-[12px] ml-[17px] h-[26px] w-6">
          <path d="M0 2h16v12H8l-4 4v-4H0z" fill="#fff" />
          <path d="M3 5.500h10M3 8h10M3 10.500h7" stroke="#2b2f2a" />
          <circle cx="15.500" cy="17.500" r="7.800" fill="#3b3d38" stroke="#8a8a86" />
          <text x="15.500" y="21.500" fill="#fff" textAnchor="middle" className="font-['Open_Sans',sans-serif] text-[10.5px] font-semibold">3</text>
        </svg>
        <div className="mr-[4px] h-10 w-px bg-[#66665e]" />
      </div>
    </div>
  );
}

/* ---------- window ---------- */

export default function App() {
  const menu = [["File", 18], ["Edit", 20], ["View", 25], ["Draw", 27], ["Chart", 29], ["Setup", 30], ["Window", 44], ["Help", 25]];
  return (
    <div className={UI + " relative flex h-[768px] w-[1366px] flex-col overflow-hidden bg-[#f0f0f0] leading-none text-black"}>
      <div className="flex h-[23px] shrink-0 items-center bg-white pl-[2px]">
        <svg viewBox="0 0 16 16" className="-mt-[1px] h-4 w-4"><rect width="16" height="16" rx="1" fill="#e8842a" /><path d="M2.500 4 5 11.500 8 5l3 6.500L13.500 4" fill="none" stroke="#fff" strokeWidth="2" /></svg>
        <T w={147} className="ml-[5px] text-[11.5px]">W-Edit - [Chart1 (transient)]</T>
        <svg viewBox="0 0 102 12" className="mr-[19px] mb-[3px] ml-auto h-3 w-[102px]" fill="none" stroke="#000">
          <path d="M0 6.500h10M45.500 4.500h7v7h-7zM47.500 4V1.500h7v7H53" shapeRendering="crispEdges" />
          <path d="M91.500 1l10 10M101.500 1l-10 10" strokeWidth="1.100" />
        </svg>
      </div>
      <Toolbars />
      <div className="flex h-[631px] shrink-0">
        <Simulations />
        <div className="flex flex-1 flex-col">
          <div className="flex h-[582px] shrink-0">
            <ChartPane />
            <Traces />
          </div>
          <div className="ml-[5px] flex flex-1 flex-col">
            <PanelHead title="Waveform Calculator" w={112} />
            <div className="mt-[3px] flex pl-[2px] text-[11.5px]">
              <div className="flex h-[21px] w-[67px] items-center border-b border-l border-[#d9d9d9] pl-[5px]"><T w={57}>Command</T></div>
              <div className="flex h-[23px] w-[127px] items-center border border-t-0 border-[#d9d9d9] bg-white pl-[5px]"><T w={113}>Waveform Calculator</T></div>
            </div>
          </div>
        </div>
      </div>
      <div className="flex h-[25px] shrink-0 items-center border-b border-[#b0b0b0]">
        <div className="flex h-full w-[18px]"><Grip /></div>
        <div className="mt-[2px] flex gap-4 text-[11.5px]">
          {menu.map(([t, w]) => <T key={t} w={w}>{t}</T>)}
        </div>
        <svg viewBox="0 0 42 12" className="mr-[6px] ml-auto h-3 w-[42px]" fill="none" stroke="#000">
          <path d="M0 9.500h8" strokeWidth="2" />
          <path d="M15.500 5.500h6v5h-6zM18 4.500V1.500h6v6h-2M18 2.500h6M15 6.500h6" shapeRendering="crispEdges" />
          <path d="M33 1.500 40.500 9M40.500 1.500 33 9" strokeWidth="2" />
        </svg>
      </div>
      <div className="flex h-5 shrink-0 items-center pt-[2px] pl-[3px] text-[11.5px]">
        <T w={188}>{"Selection: <none> <none> <none>"}</T>
        <div className="ml-auto flex h-[17px] items-center">
          <div className="flex h-full w-[124px] items-center border-l border-[#d7d7d7] pl-[5px]"><T w={31}>Select</T></div>
          <div className="h-full w-[84px] border-l border-[#d7d7d7]" />
          <div className="h-full w-[54px] border-l border-[#d7d7d7]" />
          <div className="flex h-full w-[33px] items-center border-l border-[#d7d7d7] pl-[5px] text-[#8a8a8a]"><T w={22}>CAP</T></div>
          <div className="flex h-full w-[38px] items-center border-l border-[#d7d7d7] pl-[5px]"><T w={28}>NUM</T></div>
          <div className="flex h-full w-[34px] items-center border-l border-[#d7d7d7] pl-[5px] text-[#8a8a8a]"><T w={23}>OVR</T></div>
        </div>
      </div>
      <Taskbar />
      <div className="pointer-events-none absolute top-[653px] left-[1073px] flex flex-col items-start gap-[7px] text-[#b4b4b4]">
        <T w={157} className="text-[17.5px] leading-[18px]">Activate Windows</T>
        <T w={236} className="text-[13.5px] leading-[14px]">Go to Settings to activate Windows.</T>
      </div>
    </div>
  );
}
